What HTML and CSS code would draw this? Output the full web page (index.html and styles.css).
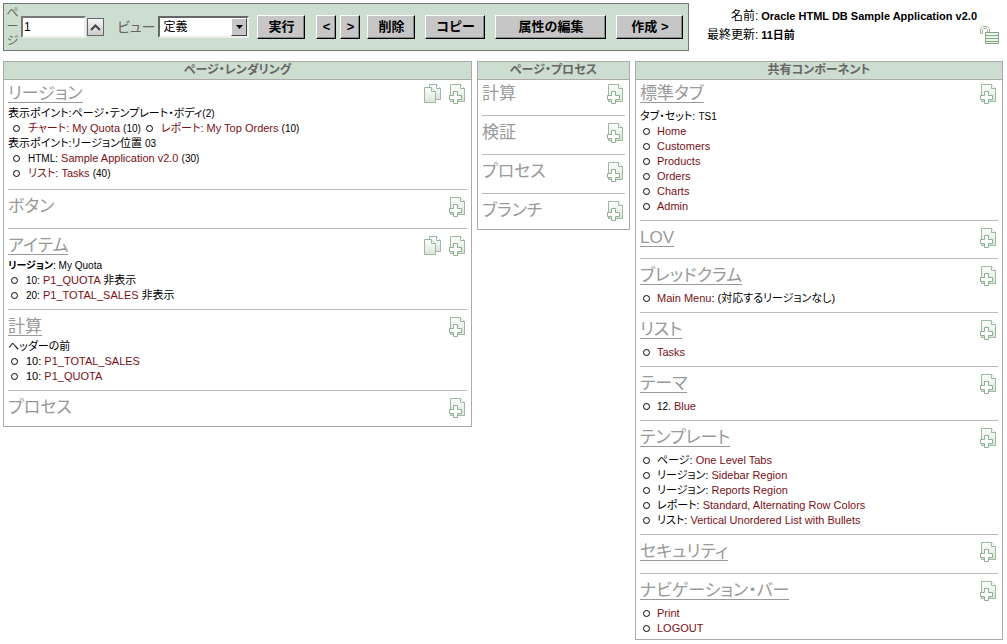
FILE: index.html
```html
<!DOCTYPE html>
<html lang="ja">
<head>
<meta charset="utf-8">
<title>ページ定義</title>
<link rel="stylesheet" href="styles.css">
</head>
<body>
<svg class="defs" aria-hidden="true">
  <defs>
    <linearGradient id="paper" x1="0" y1="0" x2="0" y2="1">
      <stop offset="0" stop-color="#fff"/><stop offset="1" stop-color="#d9e5d9"/>
    </linearGradient>
    <symbol id="add" viewBox="0 0 17 21">
      <path d="M1.500 1.500h10l4 4v13h-14z" fill="url(#paper)" stroke="#9db99f"/>
      <path d="M11.500 1.500v4h4" fill="#fff" stroke="#9db99f"/>
      <path d="M4.500 8.500h4v4h4v4h-4v4h-4v-4h-4v-4h4z" fill="#fff" stroke="#8fae92"/>
    </symbol>
    <symbol id="copy" viewBox="0 0 18 21">
      <path d="M5.500 1.500h7l4 4v11h-11z" fill="url(#paper)" stroke="#9db99f"/>
      <path d="M12.500 1.500v4h4" fill="#fff" stroke="#9db99f"/>
      <path d="M.5 4.500h7l4 4v11h-11z" fill="url(#paper)" stroke="#9db99f"/>
      <path d="M7.500 4.500v4h4" fill="#fff" stroke="#9db99f"/>
    </symbol>
    <symbol id="lock" viewBox="0 0 19 19">
      <path d="M.5 7.500v-5l2-2h5l2 2v4h-2v-3l-1-1h-3l-1 1v4z" fill="#fff" stroke="#9db99f"/>
      <path d="M5.500 6.500h13v11h-13z" fill="#eef4ee" stroke="#86a889"/>
      <path d="M5.500 9.500h13M5.500 12.500h13M5.500 15.500h13" fill="none" stroke="#86a889"/>
    </symbol>
  </defs>
</svg>

<header class="top">
  <form class="toolbar">
    <label class="page-label" for="page">ページ</label>
    <input class="page-input" id="page" type="text" value="1">
    <button class="pick" type="button" aria-label="ページの選択"><svg viewBox="0 0 11 7"><path d="M1 6l4.500-4.500L10 6" fill="none" stroke="#444" stroke-width="2"/></svg></button>
    <label class="view-label" for="view">ビュー</label>
    <span class="select-box">
      <select id="view"><option>定義</option></select>
      <span class="arrow"><svg viewBox="0 0 7 4"><path d="M0 0h7L3.500 4z"/></svg></span>
    </span>
    <button class="btn run" type="button">実行</button>
    <button class="btn step prev" type="button">&lt;</button>
    <button class="btn step" type="button">&gt;</button>
    <button class="btn" type="button">削除</button>
    <button class="btn mid" type="button">コピー</button>
    <button class="btn wide" type="button">属性の編集</button>
    <button class="btn create" type="button">作成 &gt;</button>
  </form>
  <div class="info">
    <dl class="meta">
      <dt>名前:</dt><dd>Oracle HTML DB Sample Application v2.0</dd>
      <dt>最終更新:</dt><dd>11日前</dd>
    </dl>
    <svg class="lock"><use href="#lock"/></svg>
  </div>
</header>

<main class="columns">
  <section class="panel">
    <h1>ページ・レンダリング</h1>
    <div class="group roomy">
      <div class="head"><h2><a href="#">リージョン</a></h2><span class="tools"><svg class="copy"><use href="#copy"/></svg><svg class="add"><use href="#add"/></svg></span></div>
      <p>表示ポイント:ページ・テンプレート・ボディ<small>(2)</small></p>
      <ul class="inset row">
        <li><a href="#">チャート: My Quota</a> <small>(10)</small></li>
        <li><a href="#">レポート: My Top Orders</a> <small>(10)</small></li>
      </ul>
      <p>表示ポイント:リージョン位置 <small>03</small></p>
      <ul class="inset">
        <li><small>HTML:</small> <a href="#">Sample Application v2.0</a> <small>(30)</small></li>
        <li><a href="#">リスト: Tasks</a> <small>(40)</small></li>
      </ul>
    </div>
    <div class="group empty">
      <div class="head"><h2>ボタン</h2><span class="tools"><svg class="add"><use href="#add"/></svg></span></div>
    </div>
    <div class="group">
      <div class="head"><h2><a href="#">アイテム</a></h2><span class="tools"><svg class="copy"><use href="#copy"/></svg><svg class="add"><use href="#add"/></svg></span></div>
      <p class="tiny"><b>リージョン</b>: My Quota</p>
      <ul class="near">
        <li><small>10:</small> <a href="#">P1_QUOTA</a> 非表示</li>
        <li><small>20:</small> <a href="#">P1_TOTAL_SALES</a> 非表示</li>
      </ul>
    </div>
    <div class="group">
      <div class="head"><h2><a href="#">計算</a></h2><span class="tools"><svg class="add"><use href="#add"/></svg></span></div>
      <p>ヘッダーの前</p>
      <ul class="near">
        <li>10: <a href="#">P1_TOTAL_SALES</a></li>
        <li>10: <a href="#">P1_QUOTA</a></li>
      </ul>
    </div>
    <div class="group">
      <div class="head"><h2>プロセス</h2><span class="tools"><svg class="add"><use href="#add"/></svg></span></div>
    </div>
  </section>

  <section class="panel">
    <h1>ページ・プロセス</h1>
    <div class="group empty"><div class="head"><h2>計算</h2><span class="tools"><svg class="add"><use href="#add"/></svg></span></div></div>
    <div class="group empty"><div class="head"><h2>検証</h2><span class="tools"><svg class="add"><use href="#add"/></svg></span></div></div>
    <div class="group empty"><div class="head"><h2>プロセス</h2><span class="tools"><svg class="add"><use href="#add"/></svg></span></div></div>
    <div class="group"><div class="head"><h2>ブランチ</h2><span class="tools"><svg class="add"><use href="#add"/></svg></span></div></div>
  </section>

  <section class="panel shared">
    <h1>共有コンポーネント</h1>
    <div class="group">
      <div class="head"><h2><a href="#">標準タブ</a></h2><span class="tools"><svg class="add"><use href="#add"/></svg></span></div>
      <div class="body">
        <p>タブ・セット: <small>TS1</small></p>
        <ul>
          <li><a href="#">Home</a></li>
          <li><a href="#">Customers</a></li>
          <li><a href="#">Products</a></li>
          <li><a href="#">Orders</a></li>
          <li><a href="#">Charts</a></li>
          <li><a href="#">Admin</a></li>
        </ul>
      </div>
    </div>
    <div class="group roomy">
      <div class="head"><h2><a href="#">LOV</a></h2><span class="tools"><svg class="add"><use href="#add"/></svg></span></div>
    </div>
    <div class="group">
      <div class="head"><h2><a href="#">ブレッドクラム</a></h2><span class="tools"><svg class="add"><use href="#add"/></svg></span></div>
      <div class="body"><ul><li><a href="#">Main Menu</a>: (対応するリージョンなし)</li></ul></div>
    </div>
    <div class="group">
      <div class="head"><h2><a href="#">リスト</a></h2><span class="tools"><svg class="add"><use href="#add"/></svg></span></div>
      <div class="body"><ul><li><a href="#">Tasks</a></li></ul></div>
    </div>
    <div class="group">
      <div class="head"><h2><a href="#">テーマ</a></h2><span class="tools"><svg class="add"><use href="#add"/></svg></span></div>
      <div class="body"><ul><li><small>12.</small> <a href="#">Blue</a></li></ul></div>
    </div>
    <div class="group">
      <div class="head"><h2><a href="#">テンプレート</a></h2><span class="tools"><svg class="add"><use href="#add"/></svg></span></div>
      <div class="body">
        <ul>
          <li>ページ: <a href="#">One Level Tabs</a></li>
          <li>リージョン: <a href="#">Sidebar Region</a></li>
          <li>リージョン: <a href="#">Reports Region</a></li>
          <li>レポート: <a href="#">Standard, Alternating Row Colors</a></li>
          <li>リスト: <a href="#">Vertical Unordered List with Bullets</a></li>
        </ul>
      </div>
    </div>
    <div class="group empty">
      <div class="head"><h2><a href="#">セキュリティ</a></h2><span class="tools"><svg class="add"><use href="#add"/></svg></span></div>
    </div>
    <div class="group tight">
      <div class="head"><h2><a href="#">ナビゲーション・バー</a></h2><span class="tools"><svg class="add"><use href="#add"/></svg></span></div>
      <div class="body">
        <ul>
          <li><a href="#">Print</a></li>
          <li><a href="#">LOGOUT</a></li>
        </ul>
      </div>
    </div>
  </section>
</main>
</body>
</html>
```
FILE: styles.css
```css
*, *::before { box-sizing: border-box; }

body {
  margin: 0;
  padding: 3px 4px 3px 3px;
  background: #fff;
  color: #000;
  font: 11px/15px "Liberation Sans", "Noto Sans CJK JP", sans-serif;
  font-feature-settings: "palt";
}

h1, h2, p, ul, dl, dd { margin: 0; padding: 0; }
svg { display: block; }
.defs { position: absolute; width: 0; height: 0; }
a { color: #7b1014; text-decoration: none; }
small { font-size: 10px; }

/* top bar */
.top {
  display: flex;
  justify-content: space-between;
  align-items: flex-start;
  margin-bottom: 10px;
}

.toolbar {
  display: flex;
  align-items: center;
  height: 48px;
  padding: 0 5px 0 2px;
  border: 1px solid #727877;
  background: #cdddcf;
}

.page-label {
  width: 13px;
  color: #666;
  font-size: 12px;
  line-height: 14px;
  text-align: center;
  word-break: break-all;
}

.page-input {
  width: 65px;
  height: 22px;
  margin: 0 1px 0 2px;
  padding: 0 1px;
  border: 2px solid;
  border-color: #777 #eee #eee #777;
  background: #fff;
  font: 12px "Liberation Sans", sans-serif;
}

.pick {
  display: flex;
  align-items: center;
  justify-content: center;
  width: 17px;
  height: 18px;
  padding: 0;
  border: 1px solid #666;
  background: linear-gradient(#f4f4f4, #ccc);
}
.pick svg { width: 11px; height: 7px; }

.view-label {
  margin: 0 3px 0 13px;
  color: #666;
  font-size: 14px;
}

.select-box {
  display: grid;
  grid-template-columns: 1fr 16px;
  width: 91px;
  height: 22px;
  margin-right: 8px;
  border: 2px solid;
  border-color: #666 #eee #eee #666;
  background: #fff;
}
.select-box select {
  grid-area: 1 / 1 / 2 / 3;
  appearance: none;
  padding: 0 3px;
  border: 0;
  background: transparent;
  color: #000;
  font: 12px "Liberation Sans", "Noto Sans CJK JP", sans-serif;
}
.arrow {
  grid-area: 1 / 2;
  display: flex;
  align-items: center;
  justify-content: center;
  border: 1px solid;
  border-color: #fff #444 #444 #fff;
  background: #c6c6c6;
  pointer-events: none;
}
.arrow svg { width: 7px; height: 4px; }

.btn {
  min-width: 48px;
  height: 24px;
  margin-right: 10px;
  padding: 0;
  border: 1px solid;
  border-color: #fff #000 #000 #fff;
  background: #c6c6c6;
  box-shadow: inset -1px -1px #888;
  color: #000;
  font: bold 13px/18px "Liberation Sans", "Noto Sans CJK JP", sans-serif;
}
.btn.run { margin-right: 11px; }
.btn.step { min-width: 20px; margin-right: 7px; }
.btn.prev { margin-right: 4px; }
.btn.mid { min-width: 60px; }
.btn.wide { min-width: 111px; }
.btn.create { min-width: 67px; margin-right: 0; }

.info { display: flex; gap: 3px; padding-top: 4px; }
.meta {
  display: grid;
  grid-template-columns: auto auto;
  column-gap: 3px;
  line-height: 18px;
}
.meta dt { text-align: right; font-size: 12px; }
.meta dd { font-weight: bold; }
.lock { width: 19px; height: 19px; margin: 19px 4px 0 0; }

/* columns */
.columns {
  display: grid;
  grid-template-columns: 469fr 153fr 368fr;
  gap: 5px;
  align-items: start;
}

.panel { border: 1px solid #aaa; }
.panel h1 {
  height: 18px;
  border-bottom: 1px solid #aaa;
  background: #cdddcf;
  color: #666;
  font-size: 12px;
  line-height: 17px;
  text-align: center;
}

.group {
  margin: 0 4px;
  padding: 3px 0 6px;
  border-bottom: 1px solid #bbb;
}
h1 + .group { padding-top: 0; }
.group:last-child { border-bottom: 0; }
.group.roomy { padding-bottom: 8px; }
.group.empty { padding-bottom: 9px; }
.group.tight { padding-bottom: 3px; }

.head {
  display: flex;
  justify-content: space-between;
  height: 26px;
}
.head h2 {
  color: #999;
  font-size: 17px;
  font-weight: normal;
  line-height: 27px;
}
.head a {
  display: block;
  height: 23px;
  border-bottom: 1px solid #999;
  color: #999;
}
.tools { display: flex; gap: 7px; padding: 3px 1px 0 0; }
.add { width: 17px; height: 21px; }
.copy { width: 18px; height: 21px; }

.body { padding-top: 3px; }
.tiny { font-size: 10px; }

ul { list-style: none; }
li {
  height: 15px;
  padding-left: 3px;
  white-space: nowrap;
}
li::before {
  content: "";
  display: inline-block;
  width: 7px;
  height: 7px;
  margin-right: 7px;
  border: 1px solid #000;
  border-radius: 50%;
}
.near li { padding-left: 3px; }
.near li::before { margin-right: 8px; }
.inset li { padding-left: 5px; }
.inset li::before { margin-right: 8px; }
.row { display: flex; }
```
